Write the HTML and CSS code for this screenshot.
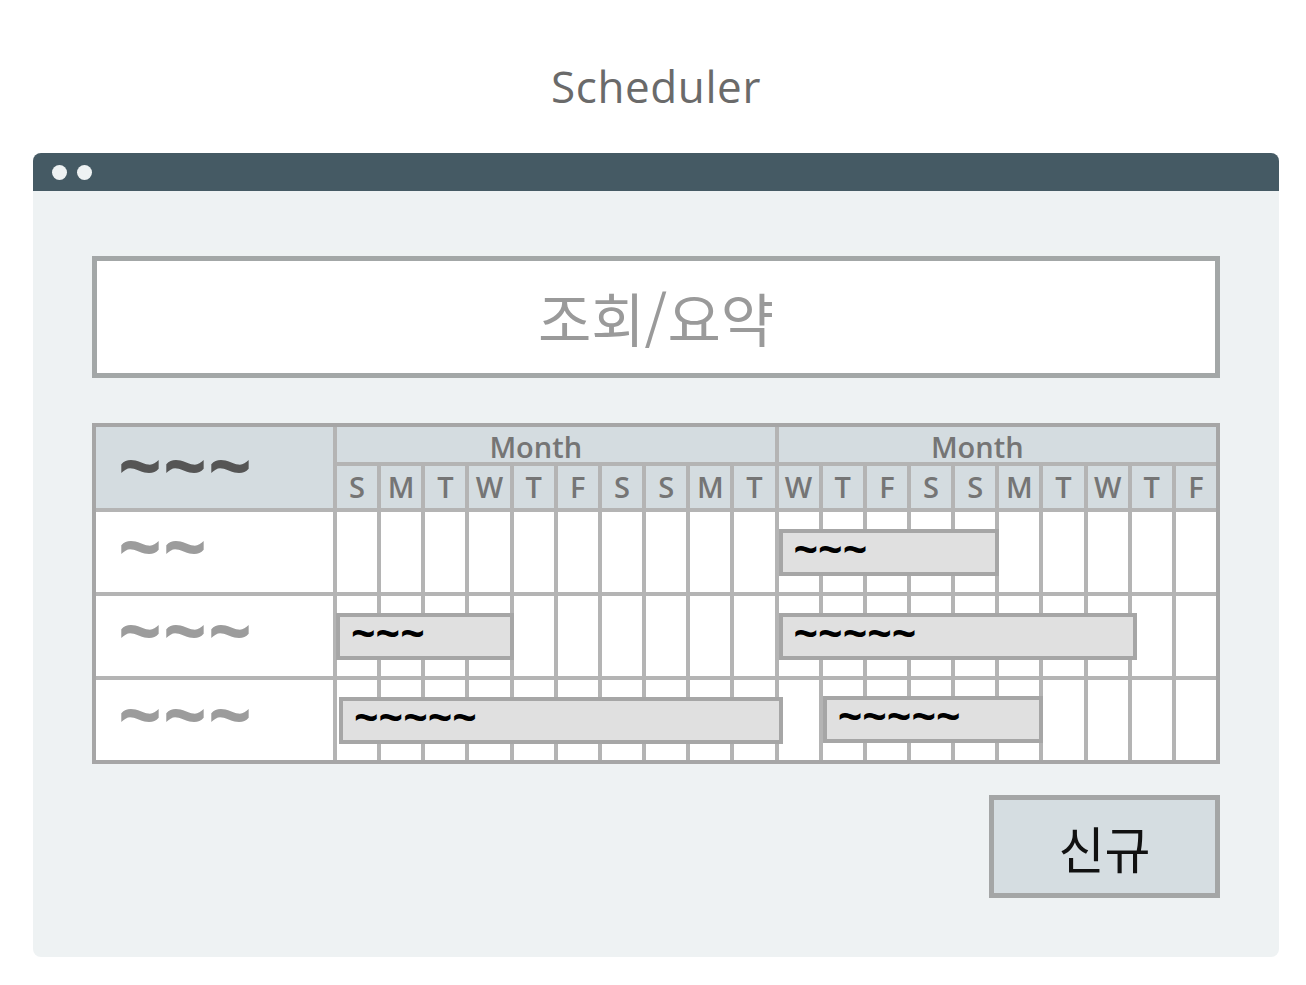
FILE: index.html
```html
<!DOCTYPE html>
<html lang="ko">
<head>
<meta charset="utf-8">
<title>Scheduler</title>
<link rel="stylesheet" href="styles.css">
</head>
<body>
<div class="page">
  <h1 class="title">Scheduler</h1>
  <div class="window">
    <div class="titlebar"><span class="dot"></span><span class="dot"></span></div>
    <div class="content">
      <div class="summary">조회/요약</div>

      <div class="sched">
        <div class="head">
          <div class="corner">~~~</div>
          <div class="head-right">
            <div class="months">
              <div class="month">Month</div>
              <div class="month">Month</div>
            </div>
            <div class="days">
              <div class="day">S</div><div class="day">M</div><div class="day">T</div><div class="day">W</div><div class="day">T</div>
              <div class="day">F</div><div class="day">S</div><div class="day">S</div><div class="day">M</div><div class="day">T</div>
              <div class="day">W</div><div class="day">T</div><div class="day">F</div><div class="day">S</div><div class="day">S</div>
              <div class="day">M</div><div class="day">T</div><div class="day">W</div><div class="day">T</div><div class="day">F</div>
            </div>
          </div>
        </div>

        <div class="row">
          <div class="label">~~</div>
          <div class="track">
            <div class="cells">
              <i></i><i></i><i></i><i></i><i></i><i></i><i></i><i></i><i></i><i></i>
              <i></i><i></i><i></i><i></i><i></i><i></i><i></i><i></i><i></i><i></i>
            </div>
            <div class="bars">
              <div class="bar bar-r1a">~~~</div>
            </div>
          </div>
        </div>

        <div class="row">
          <div class="label">~~~</div>
          <div class="track">
            <div class="cells">
              <i></i><i></i><i></i><i></i><i></i><i></i><i></i><i></i><i></i><i></i>
              <i></i><i></i><i></i><i></i><i></i><i></i><i></i><i></i><i></i><i></i>
            </div>
            <div class="bars">
              <div class="bar bar-r2a">~~~</div>
              <div class="bar bar-r2b">~~~~~</div>
            </div>
          </div>
        </div>

        <div class="row">
          <div class="label">~~~</div>
          <div class="track">
            <div class="cells">
              <i></i><i></i><i></i><i></i><i></i><i></i><i></i><i></i><i></i><i></i>
              <i></i><i></i><i></i><i></i><i></i><i></i><i></i><i></i><i></i><i></i>
            </div>
            <div class="bars">
              <div class="bar bar-r3a">~~~~~</div>
              <div class="bar bar-r3b">~~~~~</div>
            </div>
          </div>
        </div>
      </div>

      <div class="actions">
        <button class="btn-new" type="button">신규</button>
      </div>
    </div>
  </div>
</div>
</body>
</html>
```

FILE: styles.css
```css
html, body {
  margin: 0;
  padding: 0;
  background: #ffffff;
}

body {
  font-family: "Open Sans", "Noto Sans", sans-serif;
}

.page {
  width: 1246px;
  margin-left: 33px;
}

.title {
  margin: 0;
  height: 153px;
  box-sizing: border-box;
  padding-top: 56px;
  text-align: center;
  font-family: "Open Sans", sans-serif;
  font-weight: 400;
  font-size: 44px;
  letter-spacing: 0.6px;
  line-height: normal;
  color: #6a6a6a;
}

.window {
  height: 804px;
  background: #eef2f3;
  border-radius: 8px;
  overflow: hidden;
}

.titlebar {
  height: 38px;
  background: #455a64;
  display: flex;
  align-items: center;
  gap: 10px;
  padding-left: 19px;
}

.dot {
  width: 15px;
  height: 15px;
  border-radius: 50%;
  background: #eef2f3;
}

.content {
  padding: 65px 59px 0;
}

.summary {
  height: 122px;
  box-sizing: border-box;
  border: 5px solid #a3a7a7;
  background: #ffffff;
  display: flex;
  align-items: center;
  justify-content: center;
  font-family: "Noto Sans CJK KR", "Noto Sans", sans-serif;
  font-weight: 400;
  font-size: 58px;
  color: #9a9a9a;
}

/* schedule table */
.sched {
  margin-top: 45px;
  border: 4px solid #a6a6a6;
  background: #b4b4b4;
  display: flex;
  flex-direction: column;
  gap: 4px;
}

.head,
.row {
  display: grid;
  grid-template-columns: 237px 1fr;
  gap: 4px;
}

.corner,
.label {
  box-sizing: border-box;
  display: flex;
  align-items: center;
  padding-left: 22px;
  font-family: "Open Sans", "Noto Sans", sans-serif;
  font-weight: 700;
  font-size: 77px;
  line-height: 40px;
  letter-spacing: 1px;
}

.corner {
  background: #d4dce0;
  color: #555555;
  padding-bottom: 6px;
}

.head-right {
  display: flex;
  flex-direction: column;
  gap: 4px;
}

.months {
  display: grid;
  grid-template-columns: 1fr 1fr;
  gap: 4px;
}

.month,
.day {
  background: #d4dce0;
  color: #757575;
  font-family: "Open Sans", "Noto Sans", sans-serif;
  font-weight: 600;
  font-size: 29px;
  text-align: center;
}

.month {
  height: 35px;
  line-height: 40px;
  padding-right: 40px;
}

.days,
.cells,
.bars {
  display: grid;
  grid-template-columns: repeat(20, 1fr);
  gap: 4px;
}

.day {
  height: 42px;
  line-height: 42px;
}

.label {
  background: #ffffff;
  height: 80px;
  color: #9c9c9c;
  padding-bottom: 12px;
}

.track {
  display: grid;
}

.cells,
.bars {
  grid-area: 1 / 1;
  height: 80px;
}

.cells i {
  display: block;
  background: #ffffff;
}

.bar {
  grid-row: 1;
  align-self: start;
  margin-top: 17px;
  height: 47px;
  box-sizing: border-box;
  border: 4px solid #a6a6a6;
  background: #e0e0e0;
  padding-left: 11px;
  padding-bottom: 8px;
  display: flex;
  align-items: center;
  font-family: "Open Sans", "Noto Sans", sans-serif;
  font-weight: 700;
  font-size: 43px;
  line-height: 26px;
  color: #000000;
  margin-right: -4px;
}

.bar-r1a { grid-column: 11 / 16; }
.bar-r2a { grid-column: 1 / 5; margin-left: -1px; }
.bar-r2b { grid-column: 11 / 19; margin-right: -9px; }
.bar-r3a { grid-column: 1 / 11; margin-left: 2px; margin-right: -8px; }
.bar-r3b { grid-column: 12 / 17; margin-top: 16px; }

.actions {
  display: flex;
  justify-content: flex-end;
  margin-top: 31px;
}

.btn-new {
  width: 231px;
  height: 103px;
  box-sizing: border-box;
  border: 5px solid #a4a6a6;
  background: #d5dde1;
  padding: 0;
  font-family: "Noto Sans CJK KR", "Noto Sans", sans-serif;
  font-weight: 400;
  font-size: 50px;
  color: #111111;
  cursor: pointer;
}
```
